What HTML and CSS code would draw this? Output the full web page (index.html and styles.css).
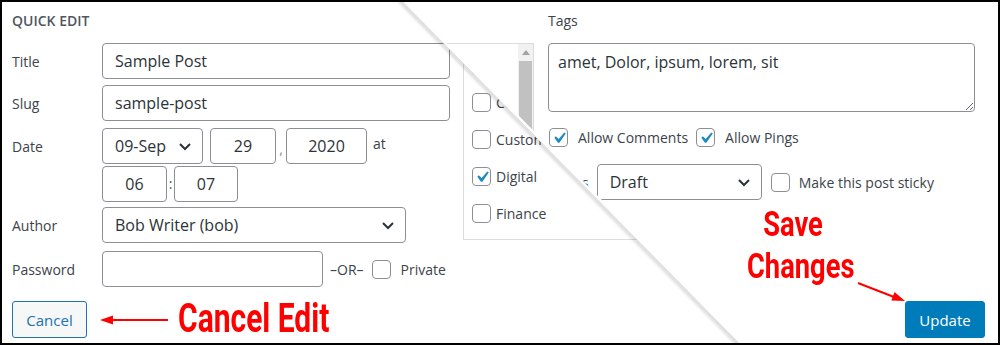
FILE: index.html
```html
<!DOCTYPE html>
<html lang="en">
<head>
  <meta charset="UTF-8">
  <title>Quick Edit</title>
  <link rel="stylesheet" href="styles.css">
</head>
<body>
  <div class="frame">

    <!-- left half of the screenshot -->
    <div class="layer layer-left">
      <div class="col-main">
        <h3 class="heading">QUICK EDIT</h3>

        <div class="row row-title">
          <span class="label">Title</span>
          <input class="field w-title" type="text" value="Sample Post">
        </div>
        <div class="row row-slug">
          <span class="label">Slug</span>
          <input class="field w-title" type="text" value="sample-post">
        </div>
        <div class="row row-date">
          <span class="label">Date</span>
          <div class="select w-month">09-Sep
            <svg class="chevron" viewBox="0 0 16 16"><polyline points="3,6 8,11 13,6"/></svg>
          </div>
          <input class="field num w-day" type="text" value="29">
          <span class="sep">,</span>
          <input class="field num w-year" type="text" value="2020">
          <span class="at">at</span>
        </div>
        <div class="row row-time">
          <input class="field num w-hour" type="text" value="06">
          <span class="sep colon">:</span>
          <input class="field num w-min" type="text" value="07">
        </div>
        <div class="row row-author">
          <span class="label">Author</span>
          <div class="select w-author">Bob Writer (bob)
            <svg class="chevron" viewBox="0 0 16 16"><polyline points="3,6 8,11 13,6"/></svg>
          </div>
        </div>
        <div class="row row-pass">
          <span class="label">Password</span>
          <input class="field w-pass" type="text" value="">
          <span class="or">–OR–</span>
          <span class="checkbox cb-private"></span>
          <span class="cb-text">Private</span>
        </div>

        <button class="btn btn-cancel">Cancel</button>
      </div>

      <div class="col-cats">
        <div class="cat-box">
          <ul class="cat-list">
            <li><span class="checkbox"></span>Business</li>
            <li><span class="checkbox"></span>Courses</li>
            <li><span class="checkbox"></span>Customers</li>
            <li><span class="checkbox"><svg class="tick" viewBox="0 0 20 20"><path d="M14.83 4.89l1.34.94-5.81 8.38H9.02L5.78 9.67l1.34-1.25 2.57 2.4z"/></svg></span>Digital</li>
            <li><span class="checkbox"></span>Finance</li>
          </ul>
        </div>
      </div>
    </div>

    <!-- right half, laid over the left one and cut along the diagonal -->
    <div class="layer layer-right">
      <div class="cat-box cat-box-right">
        <div class="scrollbar">
          <span class="scroll-up"></span>
          <span class="scroll-thumb"></span>
        </div>
      </div>

      <div class="col-tags">
        <div class="tags-label">Tags</div>
        <textarea class="tags" readonly>amet, Dolor, ipsum, lorem, sit</textarea>

        <div class="row row-allow">
          <span class="checkbox"><svg class="tick" viewBox="0 0 20 20"><path d="M14.83 4.89l1.34.94-5.81 8.38H9.02L5.78 9.67l1.34-1.25 2.57 2.4z"/></svg></span>
          <span class="cb-text">Allow Comments</span>
          <span class="checkbox cb-pings"><svg class="tick" viewBox="0 0 20 20"><path d="M14.83 4.89l1.34.94-5.81 8.38H9.02L5.78 9.67l1.34-1.25 2.57 2.4z"/></svg></span>
          <span class="cb-text">Allow Pings</span>
        </div>

        <div class="row row-status">
          <span class="status-label">Status</span>
          <div class="select w-status">Draft
            <svg class="chevron" viewBox="0 0 16 16"><polyline points="3,6 8,11 13,6"/></svg>
          </div>
          <span class="checkbox cb-sticky"></span>
          <span class="cb-text">Make this post sticky</span>
        </div>

        <div class="actions-right">
          <button class="btn btn-update">Update</button>
        </div>
      </div>
    </div>

    <!-- tear line and arrows -->
    <svg class="overlay" viewBox="0 0 1000 345">
      <defs>
        <filter id="soft" x="-20%" y="-20%" width="140%" height="140%">
          <feGaussianBlur stdDeviation="1.5"/>
        </filter>
      </defs>
      <line x1="399" y1="0" x2="739" y2="345" stroke="#000" stroke-width="4" opacity=".14" filter="url(#soft)"/>
      <line x1="401" y1="0" x2="741" y2="345" stroke="#dcdcdc" stroke-width="1"/>
      <line x1="403" y1="0" x2="743" y2="345" stroke="#fff" stroke-width="2.5"/>

      <line x1="168" y1="320" x2="110" y2="320" stroke="#f00" stroke-width="2"/>
      <polygon points="100,320 113,315.5 113,324.5" fill="#f00"/>

      <line x1="858" y1="283" x2="894" y2="297" stroke="#f00" stroke-width="2"/>
      <polygon points="905,301 894.5,292.1 891.3,300.5" fill="#f00"/>
    </svg>

    <div class="note note-cancel">Cancel Edit</div>
    <div class="note note-save">Save<br>Changes</div>
  </div>
</body>
</html>
```

FILE: styles.css
```css
body {
  margin: 0;
  background: #fff;
}

.frame {
  width: 1000px;
  height: 345px;
  box-sizing: border-box;
  border: 2px solid #000;
  position: relative;
  overflow: hidden;
  background: #fff;
  font-family: 'Open Sans', 'Noto Sans', sans-serif;
  color: #3c434a;
}

.layer {
  display: flex;
  box-sizing: border-box;
  height: 100%;
  background: #fff;
}

.layer-left {
  padding: 9px 0 0 10px;
}

.layer-right {
  position: absolute;
  top: 0;
  left: 0;
  right: 0;
  bottom: 0;
  padding: 9px 0 0 378px;
  clip-path: polygon(402px 0, 100% 0, 100% 100%, 738px 100%);
}

/* ---------- left column ---------- */

.col-main {
  width: 440px;
  flex: none;
}

.heading {
  margin: 0 0 12px;
  font-size: 14px;
  line-height: 20px;
  font-weight: 600;
  color: #50575e;
}

.row {
  display: flex;
  align-items: center;
}

.label {
  width: 90px;
  flex: none;
  font-size: 14px;
}

.field,
.select {
  height: 36px;
  box-sizing: border-box;
  border: 1px solid #8c8f94;
  border-radius: 4px;
  background: #fff;
  padding: 0 12px;
  font-family: 'Open Sans', 'Noto Sans', sans-serif;
  font-size: 16px;
  color: #2c3338;
  outline: none;
}

.select {
  display: flex;
  align-items: center;
  justify-content: space-between;
  padding-right: 9px;
}

.chevron {
  width: 16px;
  height: 16px;
  fill: none;
  stroke: #2c3338;
  stroke-width: 2;
}

.num {
  text-align: center;
  padding: 0 4px;
}

.w-title { width: 348px; }
.w-month { width: 101px; }
.w-day { width: 66px; margin-left: 7px; }
.w-year { width: 81px; }
.w-hour { width: 65px; }
.w-min { width: 64px; }
.w-author { width: 304px; }
.w-pass { width: 221px; }
.w-status { width: 165px; }

.sep {
  width: 10px;
  text-align: center;
  font-size: 14px;
  color: #8c8f94;
  align-self: flex-end;
  margin-bottom: 6px;
}

.colon {
  width: 7px;
  align-self: center;
  margin-bottom: 2px;
  color: #50575e;
}

.at {
  margin-left: 6px;
  font-size: 14px;
  margin-bottom: 6px;
}

.row-slug { margin-top: 6px; }
.row-date { margin-top: 7px; }
.row-time { margin-top: 2px; margin-left: 90px; }
.row-author { margin-top: 5px; }
.row-pass { margin-top: 8px; }

.or {
  margin-left: 7px;
  font-size: 14px;
}

.checkbox {
  width: 19px;
  height: 19px;
  box-sizing: border-box;
  flex: none;
  border: 1px solid #8c8f94;
  border-radius: 4px;
  background: #fff;
  display: inline-flex;
  align-items: center;
  justify-content: center;
  overflow: visible;
}

.tick {
  width: 22px;
  height: 22px;
  flex: none;
  fill: #1e8cbe;
}

.cb-private { margin-left: 8px; }

.cb-text {
  margin-left: 10px;
  font-size: 14px;
}

.btn {
  height: 37px;
  box-sizing: border-box;
  border-radius: 3px;
  font-family: 'Open Sans', 'Noto Sans', sans-serif;
  font-size: 15px;
  padding: 0;
  cursor: pointer;
}

.btn-cancel {
  margin-top: 14px;
  width: 75px;
  background: #f6f7f7;
  border: 1px solid #2271b1;
  color: #2271b1;
}

/* ---------- categories ---------- */

.col-cats {
  margin: 32px 0 0 11px;
}

.cat-box {
  width: 260px;
  height: 197px;
  box-sizing: border-box;
  border: 1px solid #dcdcde;
  overflow: hidden;
}

.cat-list {
  list-style: none;
  margin: 0;
  padding: 3px 0 0 8px;
}

.cat-list li {
  height: 37px;
  display: flex;
  align-items: center;
  font-size: 14px;
  white-space: nowrap;
}

.cat-list .checkbox {
  margin-right: 5px;
}

.cat-box-right {
  width: 154px;
  flex: none;
  margin-top: 32px;
  display: flex;
  justify-content: flex-end;
}

.scrollbar {
  width: 15px;
  height: 100%;
  background: #f1f1f1;
  display: flex;
  flex-direction: column;
  align-items: center;
}

.scroll-up {
  margin-top: 6px;
  width: 0;
  height: 0;
  border-left: 4px solid transparent;
  border-right: 4px solid transparent;
  border-bottom: 5px solid #a3a3a3;
}

.scroll-thumb {
  margin-top: 6px;
  width: 13px;
  flex: 1;
  background: #c1c1c1;
}

/* ---------- right column ---------- */

.col-tags {
  width: 427px;
  margin-left: 14px;
  flex: none;
}

.tags-label {
  font-size: 14px;
  line-height: 20px;
  margin-bottom: 12px;
}

.tags {
  display: block;
  width: 427px;
  height: 69px;
  box-sizing: border-box;
  border: 1px solid #8c8f94;
  border-radius: 4px;
  padding: 6px 9px;
  font-family: 'Open Sans', 'Noto Sans', sans-serif;
  font-size: 16px;
  line-height: 24px;
  color: #2c3338;
  outline: none;
  resize: both;
}

.row-allow {
  margin-top: 16px;
  padding-left: 1px;
}

.cb-pings { margin-left: 8px; }

.row-status {
  margin-top: 17px;
}

.status-label {
  font-size: 14px;
  margin-right: 8px;
}

.cb-sticky { margin-left: 9px; }

.row-status .cb-text { margin-left: 9px; }

.actions-right {
  display: flex;
  justify-content: flex-end;
  margin: 101px -10px 0 0;
}

.btn-update {
  width: 80px;
  background: #007cba;
  border: 1px solid #007cba;
  color: #fff;
}

/* ---------- annotations ---------- */

.overlay {
  position: absolute;
  top: -2px;
  left: -2px;
  width: 1000px;
  height: 345px;
  pointer-events: none;
}

.note {
  position: absolute;
  font-family: Roboto, 'Liberation Sans', sans-serif;
  font-weight: 700;
  color: #f00;
  white-space: nowrap;
}

.note-cancel {
  left: 176px;
  top: 297px;
  font-size: 40px;
  line-height: 40px;
  transform: scaleX(0.75);
  transform-origin: left top;
}

.note-save {
  left: 732px;
  top: 202px;
  width: 118px;
  text-align: center;
  font-size: 35px;
  line-height: 42px;
  transform: scaleX(0.78);
  transform-origin: center top;
}
```
